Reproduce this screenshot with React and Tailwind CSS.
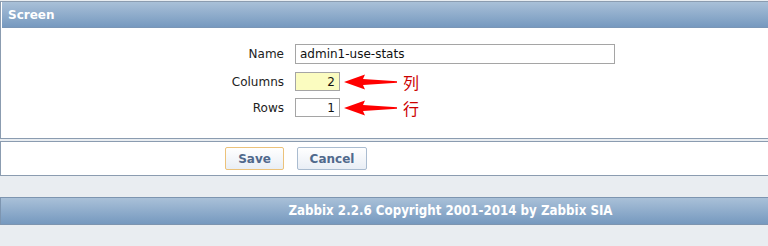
import React from "react";

function Arrow() {
  return (
    <svg width="54" height="16" viewBox="0 0 54 16" className="block">
      <polygon points="0,8 21,0.5 19,5 53,7.2 53,8.8 19,11 21,15.5" fill="#ff0000" />
    </svg>
  );
}

export default function App() {
  const sans = { fontFamily: '"DejaVu Sans", Verdana, sans-serif' };
  return (
    <div className="w-[768px] h-[246px] overflow-hidden bg-[#e9edf1]" style={sans}>
      <div className="w-[904px]">
        {/* Box 1 */}
        <div className="mt-[1px] h-[138px] border border-[#8b9cb0] bg-white pl-[1px] flex flex-col">
          <div className="h-[26px] bg-gradient-to-b from-[#a9c0d8] to-[#7699bf] border-b border-[#7a96b6] flex items-center pl-[6px]">
            <span className="text-white font-bold text-[12px] leading-none">Screen</span>
          </div>
          <div className="flex flex-col pt-[16px] text-[12px] text-[#222]">
            <div className="flex items-center h-[20px]">
              <div className="w-[282px] text-right pr-0">Name</div>
              <div className="ml-[11px] w-[320px] h-[20px] border border-[#a5a5a5] bg-white flex items-center pl-[4px] text-[#111]">admin1-use-stats</div>
            </div>
            <div className="flex items-center h-[19px] mt-[8px]">
              <div className="w-[282px] text-right">Columns</div>
              <div className="ml-[11px] w-[45px] h-[19px] border border-[#a5a5a5] bg-[#fbfcc0] flex items-center justify-end pr-[4px] text-[#111]">2</div>
              <div className="ml-[4px] mt-[1px]"><Arrow /></div>
              <span className="ml-[5px] text-[16px] leading-none text-[#cc0000]" style={{ fontFamily: '"Noto Sans CJK SC", sans-serif' }}>列</span>
            </div>
            <div className="flex items-center h-[19px] mt-[7px]">
              <div className="w-[282px] text-right">Rows</div>
              <div className="ml-[11px] w-[45px] h-[19px] border border-[#a5a5a5] bg-white flex items-center justify-end pr-[4px] text-[#111]">1</div>
              <div className="ml-[4px] mt-[1px]"><Arrow /></div>
              <span className="ml-[5px] text-[16px] leading-none text-[#cc0000]" style={{ fontFamily: '"Noto Sans CJK SC", sans-serif' }}>行</span>
            </div>
          </div>
        </div>
        {/* Box 2 */}
        <div className="mt-[2px] h-[35px] border border-[#8b9cb0] bg-white flex items-center pl-[224px] gap-[13px]">
          <button className="w-[59px] h-[23px] rounded-[2px] border border-[#ecc27a] bg-gradient-to-b from-white to-[#e9eef5] text-[12px] font-bold text-[#50698c]">Save</button>
          <button className="w-[70px] h-[23px] rounded-[2px] border border-[#aabcd0] bg-gradient-to-b from-white to-[#e9eef5] text-[12px] font-bold text-[#50698c]">Cancel</button>
        </div>
        {/* Footer */}
        <div className="mt-[21px] h-[28px] border border-[#7d95b0] bg-gradient-to-b from-[#a9c0d8] to-[#7699bf] flex items-center justify-center pr-[3px]">
          <span className="text-white font-bold text-[13.2px] leading-none" style={{ fontFamily: '"DejaVu Sans Condensed", "DejaVu Sans", sans-serif' }}>Zabbix 2.2.6 Copyright 2001-2014 by Zabbix SIA</span>
        </div>
      </div>
    </div>
  );
}
